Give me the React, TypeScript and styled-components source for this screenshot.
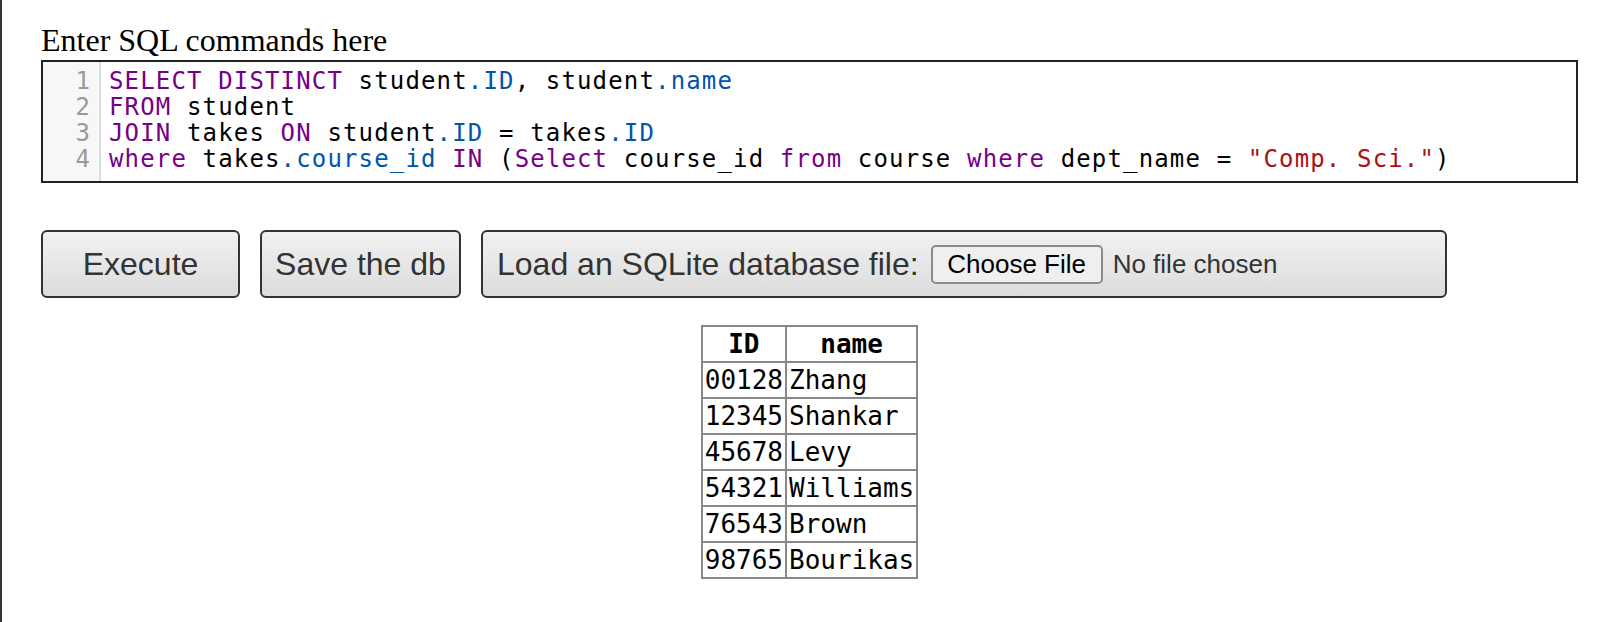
import React from "react";
import styled, { createGlobalStyle } from "styled-components";

const GlobalStyle = createGlobalStyle`
	html, body {
		margin: 0;
		padding: 0;
		background: #ffffff;
	}
`;

const Page = styled.div`
	min-height: 100vh;
	box-sizing: border-box;
	border-left: 2px solid #333;
	padding: 23px 38px 0 39px;
`;

const Label = styled.div`
	font-family: "Liberation Serif", "Times New Roman", serif;
	font-size: 32px;
	line-height: 35px;
	color: #000;
	margin-bottom: 2px;
`;

const Editor = styled.div`
	display: flex;
	border: 2px solid #222;
	background: #fff;
	font-family: "DejaVu Sans Mono", Menlo, monospace;
	font-size: 24px;
	letter-spacing: 1.15px;
	line-height: 26px;
`;

const Gutter = styled.div`
	width: 48px;
	padding: 6px 8px 9px 0;
	background: #f7f7f7;
	border-right: 2px solid #ddd;
	color: #999;
	text-align: right;
`;

const Code = styled.div`
	flex: 1;
	padding: 6px 0 9px 8px;
	white-space: pre;
	color: #000;
`;

const Line = styled.div`
	height: 26px;
`;

type TokKind = "kw" | "var" | "str";

const tokColors: Record<TokKind, string> = {
	kw: "#708",
	var: "#05a",
	str: "#a11",
};

const Tok = styled.span<{ $kind: TokKind }>`
	color: ${(p) => tokColors[p.$kind]};
`;

const Toolbar = styled.div`
	display: flex;
	gap: 20px;
	margin-top: 47px;
`;

const ActionButton = styled.button<{ $width: number }>`
	width: ${(p) => p.$width}px;
	height: 68px;
	box-sizing: border-box;
	border: 2px solid #333;
	border-radius: 6px;
	background: linear-gradient(#f1f1f1, #dcdcdc);
	color: #333;
	font-family: "Liberation Sans", Arial, sans-serif;
	font-size: 32px;
	padding: 0;
	display: flex;
	align-items: center;
	justify-content: center;
`;

const LoadBox = styled.label`
	width: 966px;
	height: 68px;
	box-sizing: border-box;
	border: 2px solid #333;
	border-radius: 6px;
	background: linear-gradient(#f1f1f1, #dcdcdc);
	color: #333;
	font-family: "Liberation Sans", Arial, sans-serif;
	font-size: 32px;
	display: flex;
	align-items: center;
	padding-left: 14px;
	gap: 12px;
`;

const HiddenInput = styled.input`
	display: none;
`;

const FilePicker = styled.span`
	display: flex;
	align-items: center;
	gap: 10px;
	font-family: "Liberation Sans", Arial, sans-serif;
	font-size: 26px;
`;

const ChooseButton = styled.span`
	box-sizing: border-box;
	height: 39px;
	width: 172px;
	border: 2px solid #8a8a8a;
	border-radius: 5px;
	background: #efefef;
	color: #000;
	display: flex;
	align-items: center;
	justify-content: center;
`;

const FileName = styled.span`
	color: #333;
`;

const ResultTable = styled.table`
	margin: 27px auto 0;
	border-collapse: collapse;
	font-family: "DejaVu Sans Mono", Menlo, monospace;
	font-size: 26px;
	line-height: 30px;
	color: #000;
`;

const Th = styled.th`
	border: 2px solid #888;
	padding: 2px 2px;
	font-weight: bold;
	text-align: center;
`;

const Td = styled.td`
	border: 2px solid #888;
	padding: 2px 2px;
	text-align: left;
`;

const rows = [
	["00128", "Zhang"],
	["12345", "Shankar"],
	["45678", "Levy"],
	["54321", "Williams"],
	["76543", "Brown"],
	["98765", "Bourikas"],
];

export default function App() {
	return (
		<>
			<GlobalStyle />
			<Page>
				<Label>Enter SQL commands here</Label>
				<Editor>
					<Gutter>
						<Line>1</Line>
						<Line>2</Line>
						<Line>3</Line>
						<Line>4</Line>
					</Gutter>
					<Code>
						<Line>
							<Tok $kind="kw">SELECT</Tok> <Tok $kind="kw">DISTINCT</Tok> student
							<Tok $kind="var">.ID</Tok>, student<Tok $kind="var">.name</Tok>
						</Line>
						<Line>
							<Tok $kind="kw">FROM</Tok> student
						</Line>
						<Line>
							<Tok $kind="kw">JOIN</Tok> takes <Tok $kind="kw">ON</Tok> student
							<Tok $kind="var">.ID</Tok> = takes<Tok $kind="var">.ID</Tok>
						</Line>
						<Line>
							<Tok $kind="kw">where</Tok> takes<Tok $kind="var">.course_id</Tok>{" "}
							<Tok $kind="kw">IN</Tok> (<Tok $kind="kw">Select</Tok> course_id{" "}
							<Tok $kind="kw">from</Tok> course <Tok $kind="kw">where</Tok> dept_name ={" "}
							<Tok $kind="str">"Comp. Sci."</Tok>)
						</Line>
					</Code>
				</Editor>

				<Toolbar>
					<ActionButton $width={199}>Execute</ActionButton>
					<ActionButton $width={201}>Save the db</ActionButton>
					<LoadBox>
						Load an SQLite database file:
						<FilePicker>
							<ChooseButton>Choose File</ChooseButton>
							<FileName>No file chosen</FileName>
						</FilePicker>
						<HiddenInput type="file" />
					</LoadBox>
				</Toolbar>

				<ResultTable>
					<thead>
						<tr>
							<Th>ID</Th>
							<Th>name</Th>
						</tr>
					</thead>
					<tbody>
						{rows.map(([id, name]) => (
							<tr key={id}>
								<Td>{id}</Td>
								<Td>{name}</Td>
							</tr>
						))}
					</tbody>
				</ResultTable>
			</Page>
		</>
	);
}
